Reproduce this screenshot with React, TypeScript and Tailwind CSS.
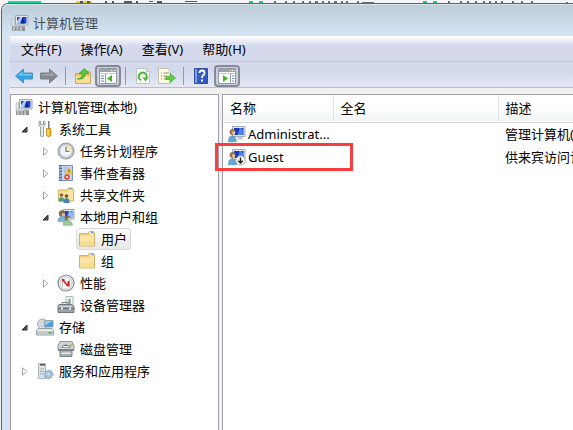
import type { ReactNode } from "react"

function ComputerIcon() {
  return (
    <svg viewBox="0 0 18 18" className="size-[18px] shrink-0">
      <path d="M1 5l2.500-.5v7L1 12z" fill="#e4e6e9" stroke="#a3a9b0" strokeWidth=".6" />
      <path d="M4.500 1.500h12.500v9.500H4.500z" fill="#e6e8ee" stroke="#a0a8b4" />
      <path d="M6 3h9.500v6.500H6z" fill="#2446cc" />
      <path d="M6 9.500V7l3-4h2.500L9 9.500z" fill="#a9d0f8" />
      <path d="M10 9.500L11.500 3 14 9.500z" fill="#12259a" />
      <path d="M9 11.500h4l1 1.500H8z" fill="#b9bfc8" />
      <path d="M1 12.500h13v4.500H1z" fill="#8b9095" />
      <path d="M2 13.500h2v1H2zM5.500 13.500h2v1h-2zM9 13.500h2v1H9zM2 15.500h2v1H2zM5.500 15.500h2v1h-2zM9 15.500h2v1H9z" fill="#eceef0" />
    </svg>
  )
}

function ToolsIcon() {
  return (
    <svg viewBox="0 0 18 18" className="size-[18px] shrink-0">
      <path d="M3 1.500v4l1.500 1.500V16q1.500 1.500 3 0V7L9 5.500v-4L7.500 1v3.500h-3V1z" fill="#e6e8ea" stroke="#888d92" strokeWidth=".8" />
      <path d="M12 1h1.500v8H12z" fill="#777d83" />
      <path d="M10.500 8.500h4.500v7q-2.200 2.500-4.500 0z" fill="#f2b81c" stroke="#b98206" strokeWidth=".7" />
      <path d="M12 9.500v6" stroke="#ffe79a" />
    </svg>
  )
}

function ClockIcon() {
  return (
    <svg viewBox="0 0 18 18" className="size-[18px] shrink-0">
      <circle cx="9" cy="9" r="8" fill="#c6c8cb" stroke="#919599" />
      <circle cx="9" cy="9" r="6.200" fill="#eef3f9" stroke="#a9aeb3" strokeWidth=".6" />
      <path d="M9 9.500V3a6.200 6.200 0 0 1 6 6.500z" fill="#fbe6b4" />
      <path d="M9 4.500v5h3.500" fill="none" stroke="#5f7f9f" strokeWidth="1.200" />
    </svg>
  )
}

function EventIcon() {
  return (
    <svg viewBox="0 0 18 18" className="size-[18px] shrink-0">
      <path d="M2.500 1.500h13v15h-13z" fill="#c3d8ee" stroke="#7493b6" />
      <path d="M2 1h3v16H2z" fill="#4a6d9c" />
      <path d="M1 3h4M1 6h4M1 9h4M1 12h4M1 15h4" stroke="#dce6f0" />
      <path d="M6.500 4h4M6.500 6h3M6.500 8h2" stroke="#8aa5c4" strokeWidth=".7" />
      <path d="M12 3.500l3.800 6.500H8.200z" fill="#ffd23c" stroke="#dda21c" strokeWidth=".6" />
      <path d="M12 5.500v3" stroke="#5a3d00" />
      <circle cx="10" cy="13" r="2.800" fill="#e0483c" />
      <path d="M9 12l2 2m0-2l-2 2" stroke="#fff" strokeWidth=".8" />
    </svg>
  )
}

function SharedIcon() {
  return (
    <svg viewBox="0 0 18 18" className="size-[18px] shrink-0">
      <path d="M1.500 4h8l1.500-2h4.500l1 1.500V15h-15z" fill="#f0d184" stroke="#cda954" strokeWidth=".8" />
      <path d="M12 2h3v1h-3z" fill="#5aa9df" />
      <path d="M2 5.500h9l1-1.200h4V14H2z" fill="#fae5a3" />
      <circle cx="4.500" cy="9" r="1.800" fill="#876341" />
      <path d="M1.500 15.500q0-4.300 3-4.300t3 4.300z" fill="#4d9b80" />
      <circle cx="9.500" cy="10" r="1.800" fill="#755335" />
      <path d="M6.500 17q0-5 3-5t3.200 5z" fill="#4684b4" />
    </svg>
  )
}

function UsersIcon() {
  return (
    <svg viewBox="0 0 18 18" className="size-[18px] shrink-0">
      <path d="M6 1.500h11v9.500H6z" fill="#e3e7ed" stroke="#98a1ad" />
      <path d="M7.500 3h8v6.500h-8z" fill="#2445c0" />
      <path d="M10 9.500L12 3h2l1.500 3v3.500z" fill="#8cc0f5" />
      <circle cx="5" cy="5.500" r="3.200" fill="#856c50" />
      <path d="M4.500 5.500H8v2L6 9z" fill="#e7c49b" />
      <path d="M1 13.500q0-5 4-5t4.500 5z" fill="#7cb4d4" stroke="#5b8fae" strokeWidth=".5" />
      <circle cx="10.500" cy="10" r="2.600" fill="#8a7048" />
      <path d="M10.500 10H13v1.500l-2 1z" fill="#e9c79c" />
      <path d="M6 17.200q0-4.700 4.500-4.700t5 4.700z" fill="#9ecb9a" stroke="#6ba067" strokeWidth=".5" />
    </svg>
  )
}

function FolderIcon() {
  return (
    <svg viewBox="0 0 18 18" className="size-[18px] shrink-0">
      <path d="M1.500 3.500h8l2-2h4l1 1.500v13h-15z" fill="#efcf7d" stroke="#d3b266" />
      <path d="M11 3l1-1h3v1.500z" fill="#fff" />
      <path d="M13 2h2v1h-2z" fill="#4ba0dd" />
      <path d="M2 5.500h9l1-1.500h4v11.500H2z" fill="#fbe5a4" />
      <path d="M2 11h14v4.500H2z" fill="#f7dd92" />
    </svg>
  )
}

function PerformanceIcon() {
  return (
    <svg viewBox="0 0 18 18" className="size-[18px] shrink-0">
      <circle cx="9" cy="9" r="8" fill="#fff" stroke="#84898e" strokeWidth="1.200" />
      <circle cx="9" cy="9" r="6.200" fill="#f9fafb" stroke="#a8aeb3" strokeWidth=".8" />
      <path d="M5.500 12.500v-6M12.500 12.500V6" fill="none" stroke="#b9b9b9" />
      <path d="M5.500 5.500L11.500 12.500M5 6h2.500M11.500 7v5" fill="none" stroke="#d92020" strokeWidth="1.800" />
    </svg>
  )
}

function DeviceIcon() {
  return (
    <svg viewBox="0 0 18 18" className="size-[18px] shrink-0">
      <path d="M9 .5h7v10H9z" fill="#edf0f2" stroke="#b3babf" />
      <path d="M11.500 3h2v5h-2z" fill="#72ac57" />
      <path d="M5 8V6.500h6V8" fill="none" stroke="#7a8288" />
      <path d="M2 8.500h13l2 2v6H1v-6z" fill="#9aa3aa" stroke="#70787e" />
      <path d="M2.500 9.500h12l1 1.500h-14z" fill="#cbd0d3" />
      <path d="M1 12.500h16" stroke="#666e76" />
      <path d="M4 11.500h2v2H4zM12 11.500h2v2h-2z" fill="#e7e9ea" />
    </svg>
  )
}

function StorageIcon() {
  return (
    <svg viewBox="0 0 18 18" className="size-[18px] shrink-0">
      <circle cx="6.500" cy="6" r="5" fill="#d8dbdf" stroke="#a2a8ad" />
      <circle cx="6.500" cy="6" r="1.500" fill="#fff" stroke="#a2a8ad" strokeWidth=".6" />
      <path d="M8.500 2.500h8.500v6.500H8.500z" fill="#419dd7" stroke="#97a2ab" />
      <path d="M9 3h7.500L9 7.500z" fill="#90d1f5" />
      <path d="M2 10.500h14l1.500 2v4.500H.5v-4.500z" fill="#e6e8ea" stroke="#979ea3" />
      <path d="M1 13h16v3.500H1z" fill="#c6cacd" />
      <path d="M12.500 14h3v1.500h-3z" fill="#3fae37" />
    </svg>
  )
}

function DiskIcon() {
  return (
    <svg viewBox="0 0 18 18" className="size-[18px] shrink-0">
      <path d="M3 1.500h12l2 4v4H1v-4z" fill="#d2d5d7" stroke="#90979b" />
      <path d="M4 7.500q5-6 10 0z" fill="#666d72" />
      <path d="M6 6.500h6" stroke="#f3f4f4" />
      <circle cx="14.500" cy="5" r="1.400" fill="#b8be54" />
      <path d="M3 9.500h12v7H3z" fill="#a9aeb2" stroke="#7d8488" />
      <path d="M1 9h16v2H1z" fill="#7f868a" />
      <path d="M4.500 12.500h9v1.500h-9z" fill="#e9ebed" />
    </svg>
  )
}

function ServicesIcon() {
  return (
    <svg viewBox="0 0 18 18" className="size-[18px] shrink-0">
      <path d="M2.500 1.500h7v15h-7z" fill="#dce3e8" stroke="#b0bac2" />
      <path d="M4 2h5v1.500H4z" fill="#49545d" />
      <path d="M4 7h4M4 9.500h4M4 12h3" stroke="#9ba9b4" />
      <circle cx="12.500" cy="12.500" r="3.700" fill="#b5cee5" stroke="#7ea2c6" />
      <circle cx="12.500" cy="12.500" r="4.500" fill="none" stroke="#7ea2c6" strokeDasharray="1.500 1.330" />
      <circle cx="12.500" cy="12.500" r="1.300" fill="#fff" stroke="#7ea2c6" strokeWidth=".7" />
    </svg>
  )
}

function AccountIcon({ disabled = false }: { disabled?: boolean }) {
  return (
    <svg viewBox="0 0 18 18" className="size-[18px] shrink-0">
      <path d="M4.500 1.500h12.500v10H4.500z" fill="#e4e8ee" stroke="#a3abb7" />
      <path d="M6 3h9.500v7H6z" fill="#1a36bc" />
      <path d="M9.500 10l2-7h2l2 3v4z" fill="#4b82e6" />
      <path d="M10 12h4l1.500 2.500H9z" fill="#c3c8d0" />
      <circle cx="4.500" cy="7" r="3" fill="#9a7550" />
      <path d="M4 6.500h3v2.500L5 10.500z" fill="#f0cda4" />
      <path d="M.5 16.800q0-6 3.500-6t4.500 6z" fill="#62a9d3" stroke="#4a86ae" strokeWidth=".6" />
      {disabled && (
        <>
          <circle cx="12.500" cy="12.500" r="4.700" fill="#f8f8f8" stroke="#969696" strokeWidth=".8" />
          <path d="M12.500 9.500v5.500m-2.300-2.200l2.300 2.300 2.300-2.300" fill="none" stroke="#242424" strokeWidth="1.400" />
        </>
      )}
    </svg>
  )
}

function ArrowIcon({ forward = false }: { forward?: boolean }) {
  return forward ? (
    <svg viewBox="0 0 18 16" className="h-4 w-[18px]">
      <path d="M.5 5h9V1l8 7-8 7v-4h-9z" fill="#85888c" stroke="#7e8287" />
      <path d="M1.500 6h9V3.500L15 7.500h-13.500z" fill="#a4a7aa" />
    </svg>
  ) : (
    <svg viewBox="0 0 18 16" className="h-4 w-[18px]">
      <path d="M17.500 5h-9V1l-8 7 8 7v-4h9z" fill="#2ba5e4" stroke="#5590bc" />
      <path d="M16.500 6h-9V3.500L3 7.500h13.500z" fill="#71cdf8" />
    </svg>
  )
}

function UpFolderIcon() {
  return (
    <svg viewBox="0 0 16 16" className="size-4">
      <path d="M.5 5.500h8l1-2h5l1 1v11H.5z" fill="#e9c46c" stroke="#cda85a" />
      <path d="M1 8h14v7H1z" fill="#f9de94" />
      <path d="M2.500 11q5-1 4.500-5.500H4L9.500.500 14 5.500h-3.500Q10 12 2.500 11z" fill="#5cc936" stroke="#3a9423" strokeWidth=".7" />
    </svg>
  )
}

function PaneIcon({ right = false }: { right?: boolean }) {
  return (
    <svg viewBox="0 0 18 16" className="h-4 w-[18px]">
      <path d="M.5.500h17v15H.5z" fill="#fff" stroke="#95999f" />
      <path d="M1 1h16v3H1z" fill="#9ba3ae" />
      <path d="M12 2.500h1m1 0h1m1 0h1" stroke="#fff" />
      <path d="M1 5.500h16" stroke="#c6cbd2" />
      {right ? (
        <>
          <path d="M12.500 6v10" stroke="#95999f" />
          <path d="M14 8h2m-2 2.500h2M14 13h2" stroke="#5590c9" />
          <path d="M5 7l5 3.500L5 14z" fill="#43b52a" />
        </>
      ) : (
        <>
          <path d="M6.500 6v10" stroke="#95999f" />
          <path d="M2 8h3m-3 2.500h3M2 13h3" stroke="#5590c9" />
          <path d="M13 7l-5 3.500 5 3.500z" fill="#43b52a" />
        </>
      )}
    </svg>
  )
}

function RefreshIcon() {
  return (
    <svg viewBox="0 0 16 16" className="size-4">
      <path d="M1.500.500h10l3 3v12h-13z" fill="#fbfbf5" stroke="#c0c3c6" />
      <path d="M11.500.500v3h3" fill="#e0e3e6" stroke="#c0c3c6" />
      <path d="M6 12.200A4 4 0 1 1 11.500 10" fill="none" stroke="#43b93b" strokeWidth="2" />
      <path d="M7.500 9.500h6L10.500 13.500z" fill="#43b93b" />
    </svg>
  )
}

function ExportIcon() {
  return (
    <svg viewBox="0 0 18 16" className="h-4 w-[18px]">
      <path d="M.5.500h9l3 3v12H.5z" fill="#fffbe5" stroke="#c2c1b0" />
      <path d="M3 5h1m1.500 0H11M3 8h1m1.500 0H9M3 11h1m1.500 0H9" stroke="#888" />
      <path d="M8 8.500h4v-3l5.500 4.500-5.500 4.500v-3H8z" fill="#65cc43" stroke="#3da629" strokeWidth=".7" />
    </svg>
  )
}

function HelpIcon() {
  return (
    <svg viewBox="0 0 16 16" className="size-4">
      <path d="M1.500.500h13v15h-13z" fill="#345bc0" stroke="#2f4c9f" />
      <path d="M2 1h2v14H2z" fill="#7d9fe4" />
      <path d="M6.500 5q0-2.500 2.500-2.500T11.500 5q0 1.400-1.300 2.200T9 10" fill="none" stroke="#fff" strokeWidth="1.800" />
      <path d="M8 11.500h2v2H8z" fill="#fff" />
    </svg>
  )
}

type Node = { name: string; icon: ReactNode; open?: boolean; selected?: boolean; children?: Node[] }

const tree: Node[] = [
  {
    name: "系统工具",
    icon: <ToolsIcon />,
    open: true,
    children: [
      { name: "任务计划程序", icon: <ClockIcon />, open: false },
      { name: "事件查看器", icon: <EventIcon />, open: false },
      { name: "共享文件夹", icon: <SharedIcon />, open: false },
      {
        name: "本地用户和组",
        icon: <UsersIcon />,
        open: true,
        children: [
          { name: "用户", icon: <FolderIcon />, selected: true },
          { name: "组", icon: <FolderIcon /> },
        ],
      },
      { name: "性能", icon: <PerformanceIcon />, open: false },
      { name: "设备管理器", icon: <DeviceIcon /> },
    ],
  },
  {
    name: "存储",
    icon: <StorageIcon />,
    open: true,
    children: [{ name: "磁盘管理", icon: <DiskIcon /> }],
  },
  { name: "服务和应用程序", icon: <ServicesIcon />, open: false },
]

function TreeItem({ node }: { node: Node }) {
  return (
    <li>
      <div className="flex h-[22px] items-center">
        <div className="flex w-[14px] shrink-0">
          {node.open !== undefined && (
            <button aria-label={node.name} aria-expanded={node.open}>
              <svg viewBox="0 0 9 9" className="size-[9px]">
                {node.open ? (
                  <path d="M7 2v5H2z" fill="#505050" stroke="#303030" />
                ) : (
                  <path d="M2.500.800v7.400L6.800 4.500z" fill="#fff" stroke="#a6a6a6" />
                )}
              </svg>
            </button>
          )}
        </div>
        <button
          className={
            node.selected
              ? "flex h-[22px] items-center gap-[5px] rounded-[3px] border border-[#dadada] bg-linear-to-b from-[#fafafa] to-[#e8e8e8] pr-[3px] pl-px"
              : "flex h-[22px] items-center gap-[5px] px-[2px]"
          }
        >
          {node.icon}
          {node.name}
        </button>
      </div>
      {node.children && (
        <ul className="pl-[21px]">
          {node.children.map((child) => (
            <TreeItem key={child.name} node={child} />
          ))}
        </ul>
      )}
    </li>
  )
}

function Separator() {
  return <div className="h-[18px] w-px bg-[#9298a8]" />
}

function Toolbar() {
  const pressed = "flex h-[22px] w-[26px] items-center justify-center rounded-[4px] border-2 border-[#858a96] bg-[#cbd0de]"
  return (
    <div className="flex h-[26px] shrink-0 items-center border-b border-[#b9bcc9] bg-linear-to-b from-[#d4daec] from-40% to-[#e5e9f6] pt-[2px] pl-[5px]">
      <div className="flex items-center gap-[7px]">
        <button aria-label="后退"><ArrowIcon /></button>
        <button aria-label="前进"><ArrowIcon forward /></button>
        <Separator />
      </div>
      <div className="flex items-center gap-1 pl-[9px]">
        <button aria-label="上移"><UpFolderIcon /></button>
        <button aria-label="显示/隐藏控制台树" className={pressed}><PaneIcon /></button>
        <Separator />
      </div>
      <div className="flex items-center gap-[7px] pl-[9px]">
        <button aria-label="刷新"><RefreshIcon /></button>
        <button aria-label="导出列表"><ExportIcon /></button>
        <Separator />
      </div>
      <div className="flex items-center gap-[5px] pl-[9px]">
        <button aria-label="帮助"><HelpIcon /></button>
        <button aria-label="显示/隐藏操作窗格" className={pressed}><PaneIcon right /></button>
      </div>
    </div>
  )
}

const accounts = [
  { name: "Administrat...", description: "管理计算机(域)的内置帐户", icon: <AccountIcon /> },
  { name: "Guest", description: "供来宾访问计算机或访问域的内置帐户", icon: <AccountIcon disabled />, marked: true },
]

function AccountTable() {
  const th = "border-r border-[#dfe3e8] pl-[7px] text-left font-normal"
  return (
    <table className="w-full table-fixed border-collapse whitespace-nowrap">
      <colgroup>
        <col className="w-[110px]" />
        <col className="w-[165px]" />
        <col />
      </colgroup>
      <thead>
        <tr className="h-[27px] border-b border-[#d5d5d5] bg-linear-to-b from-white from-50% to-[#f2f3f5]">
          <th className={th}>名称</th>
          <th className={th}>全名</th>
          <th className="pl-[7px] text-left font-normal">描述</th>
        </tr>
      </thead>
      <tbody>
        {accounts.map((account) => (
          <tr key={account.name} className="h-[23px]">
            <td className="p-0">
              <div className="relative flex items-center gap-[2px] pl-[5px]">
                {account.icon}
                {account.name}
                {/* Highlight frame round the account */}
                {account.marked && (
                  <div className="pointer-events-none absolute -top-[5px] -left-2 h-7 w-[138px] border-3 border-[#fa3c3c]" />
                )}
              </div>
            </td>
            <td />
            <td className="overflow-hidden py-0 pr-0 pl-[7px]">{account.description}</td>
          </tr>
        ))}
      </tbody>
    </table>
  )
}

function BackdropStrip() {
  return (
    <svg className="block h-[3px] w-full shrink-0 bg-[#f5f5f5]">
      <path d="M8 1h33v2H8z" fill="#18d69d" />
      <path d="M76 1h16v2H76z" fill="#f2dc21" />
      <path d="M80 1h3v2h-3zM87 1h3v2h-3zM105 1h2v2h-2zM112 1h2v2h-2zM124 1h8v2h-8zM136 1h2v2h-2zM149 1h4v1h-4zM157 1h5v2h-5zM185 1h12v1h-12z" fill="#555b5e" />
      <path d="M249 1h4v2h-4zM259 1h4v2h-4zM423 1h4v2h-4zM433 1h4v2h-4z" fill="#32c873" />
      <path d="M274 1h2v2h-2zM285 1h2v2h-2zM293 1h2v2h-2zM302 1h2v2h-2zM309 1h2v2h-2zM315 1h3v2h-3zM322 1h2v2h-2zM328 1h2v2h-2zM334 1h3v2h-3zM341 1h2v2h-2zM346 1h2v2h-2zM357 1h2v2h-2zM362 2h12v1h-12zM448 1h2v2h-2zM460 1h2v2h-2zM467 1h2v2h-2zM475 1h2v2h-2zM483 1h2v2h-2zM489 1h2v2h-2zM495 1h2v2h-2zM501 1h2v2h-2zM512 1h2v2h-2zM521 1h2v2h-2zM531 1h2v2h-2zM566 2h2v1h-2z" fill="#68737c" />
    </svg>
  )
}

export default function App() {
  return (
    <div className="flex min-h-screen flex-col overflow-hidden bg-[#f2f2f2] font-['Noto_Sans','Noto_Sans_CJK_SC',sans-serif] text-[13px] leading-[18px] text-black">
      <BackdropStrip />
      <div className="ml-px flex flex-1 flex-col rounded-tl-[7px] border-t border-l border-[#5c636b] bg-[#d7e3f2] pl-2">
        <header className="-ml-2 flex h-8 shrink-0 items-center gap-1 rounded-tl-[6px] border-t border-[#dce6ef] bg-linear-to-b from-[#becdda] to-[#d6e5f3] pt-1 pl-[9px]">
          <ComputerIcon />
          <h1 className="text-[#46515c]">计算机管理</h1>
        </header>
        <nav className="flex h-[26px] shrink-0 items-center gap-[19px] border-b border-[#c5c7cc] bg-linear-to-b from-white to-[#d4daec] to-40% pl-[11px]">
          <button>文件(F)</button>
          <button>操作(A)</button>
          <button>查看(V)</button>
          <button>帮助(H)</button>
        </nav>
        <Toolbar />
        <main className="flex flex-1 gap-[3px] bg-[#f0f0f0] pt-[6px]">
          <aside className="w-[209px] shrink-0 border-x border-t border-[#a0a0aa] bg-white pt-px">
            <button className="flex h-[22px] items-center gap-[5px] pl-1">
              <ComputerIcon />
              计算机管理(本地)
            </button>
            <ul className="pl-[9px]">
              {tree.map((node) => (
                <TreeItem key={node.name} node={node} />
              ))}
            </ul>
          </aside>
          <section className="min-w-0 flex-1 border-t border-l border-[#a0a0aa] bg-white">
            <AccountTable />
          </section>
        </main>
      </div>
    </div>
  )
}
